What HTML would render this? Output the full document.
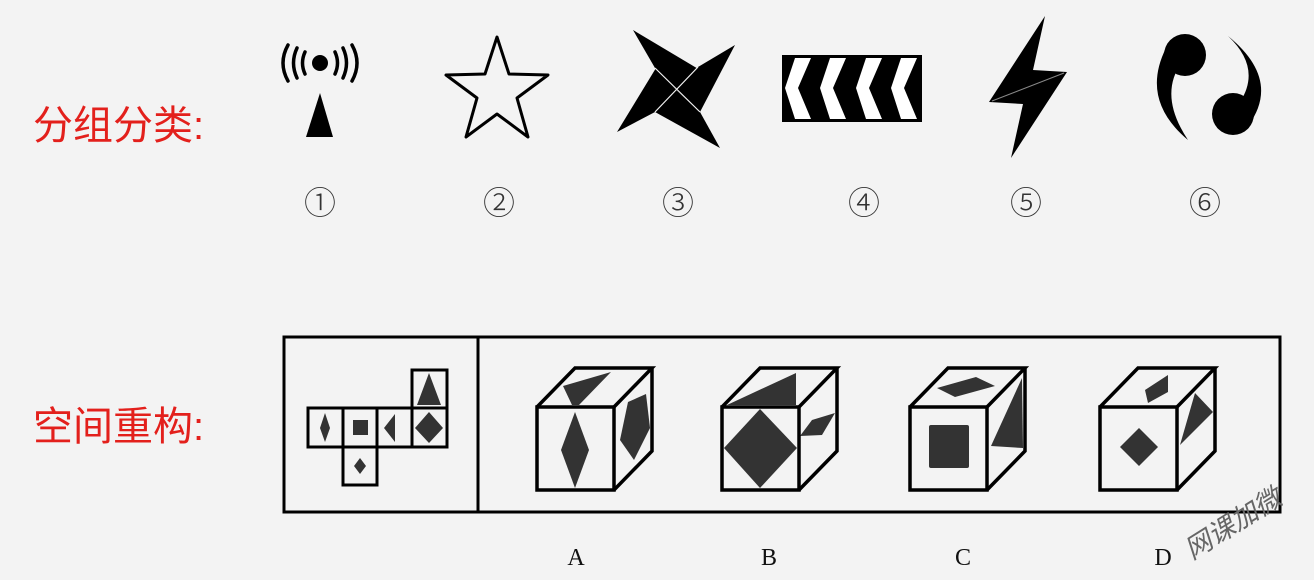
<!DOCTYPE html>
<html><head><meta charset="utf-8"><style>
html,body{margin:0;padding:0;background:#f3f3f3;}
svg{display:block}
.r{font-family:"Liberation Sans","Noto Sans CJK SC",sans-serif;fill:#e3201c;font-size:40px}
.n{font-family:"Noto Sans CJK SC","DejaVu Sans",sans-serif;fill:#333;font-size:32px;font-weight:300}
.l{font-family:"Liberation Serif",serif;fill:#111;font-size:24px}
</style></head><body>
<svg width="1314" height="580" viewBox="0 0 1314 580" xmlns="http://www.w3.org/2000/svg">
<rect width="1314" height="580" fill="#f3f3f3"/>
<text class="r" x="33" y="139">分组分类:</text>
<text class="r" x="33" y="440">空间重构:</text>

<!-- 1 antenna -->
<g fill="#000" stroke="#000">
<circle cx="320" cy="63" r="8" stroke="none"/>
<g fill="none" stroke-width="3.5" stroke-linecap="round">
<path d="M305 52 Q300 63 305 74"/><path d="M297 48 Q290 63 297 78"/><path d="M288 45 Q278 63 288 81"/>
<path d="M335 52 Q340 63 335 74"/><path d="M343 48 Q350 63 343 78"/><path d="M352 45 Q362 63 352 81"/>
</g>
<path d="M320 93 L333 137 L306 137 Z" stroke="none"/>
</g>
<!-- 2 star -->
<path d="M497 37 L509 74 L548 75 L517 98 L528 137 L497 114 L466 137 L477 98 L446 75 L485 74 Z" fill="none" stroke="#000" stroke-width="3" stroke-linejoin="round"/>
<!-- 3 pinwheel -->
<g fill="#000">
<path d="M633 30 L700 70 L676 90 L655 68 Z"/>
<path d="M735 45 L700 112 L676 90 L698 67 Z"/>
<path d="M720 148 L655 112 L676 90 L700 112 Z"/>
<path d="M617 132 L656 68 L676 90 L655 112 Z"/>
</g>
<g stroke="#f3f3f3" stroke-width="1.2"><line x1="655" y1="68" x2="700" y2="112"/><line x1="698" y1="67" x2="655" y2="112"/></g>
<!-- 4 chevrons -->
<rect x="782" y="55" width="140" height="67" fill="#000"/>
<g fill="#fff">
<path d="M795 58 L811 58 L798 88 L811 119 L795 119 L785 88 Z"/>
<path d="M830 58 L846 58 L833 88 L846 119 L830 119 L820 88 Z"/>
<path d="M866 58 L882 58 L869 88 L882 119 L866 119 L856 88 Z"/>
<path d="M901 58 L917 58 L904 88 L917 119 L901 119 L891 88 Z"/>
</g>
<!-- 5 lightning -->
<path d="M1045 16 L1033 70 L1067 72 L1011 158 L1023 104 L989 102 Z" fill="#000"/>
<line x1="992" y1="101" x2="1064" y2="73" stroke="#888" stroke-width="1"/>
<!-- 6 commas -->
<g fill="#000">
<circle cx="1185" cy="55" r="21"/>
<path d="M1166 48 Q1140 100 1188 140 Q1158 95 1182 62 Z"/>
<circle cx="1233" cy="114" r="21"/>
<path d="M1228 36 Q1282 80 1248 126 L1240 102 Q1262 68 1228 36 Z"/>
</g>

<g class="n" text-anchor="middle">
<text x="320" y="214">①</text><text x="499" y="214">②</text><text x="678" y="214">③</text>
<text x="864" y="214">④</text><text x="1026" y="214">⑤</text><text x="1205" y="214">⑥</text>
</g>

<!-- box -->
<rect x="284" y="337" width="996" height="175" fill="none" stroke="#000" stroke-width="3"/>
<line x1="478" y1="337" x2="478" y2="512" stroke="#000" stroke-width="3"/>

<!-- net -->
<g fill="none" stroke="#000" stroke-width="3">
<rect x="308" y="408" width="139" height="39"/>
<line x1="343" y1="408" x2="343" y2="447"/><line x1="377" y1="408" x2="377" y2="447"/><line x1="412" y1="408" x2="412" y2="447"/>
<rect x="412" y="370" width="35" height="38"/>
<rect x="343" y="447" width="34" height="38"/>
</g>
<g fill="#333">
<path d="M325 413 L330 428 L325 442 L320 428 Z"/>
<rect x="353" y="420" width="15" height="15"/>
<path d="M395 414 L395 442 L384 428 Z"/>
<path d="M429 373 L441 405 L417 405 Z"/>
<path d="M429 412 L443 428 L429 443 L415 428 Z"/>
<path d="M360 458 L366 466 L360 474 L354 466 Z"/>
</g>

<!-- cubes -->
<g fill="#333">
<path d="M575 412 L589 450 L575 488 L561 450 Z"/>
<path d="M563 386 L611 372 L579 405 L572 405 Z"/>
<path d="M628 402 L646 394 L650 428 L634 460 L620 440 Z"/>
<path d="M760 409 L797 448 L760 488 L724 448 Z"/>
<path d="M727 405 L796 373 L796 405 Z"/>
<path d="M800 436 L812 420 L835 413 L822 435 Z"/>
<rect x="929" y="425" width="40" height="43" rx="2"/>
<path d="M937 388 L976 377 L995 386 L955 397 Z"/>
<path d="M991 446 L1022 378 L1023 448 Z"/>
<path d="M1139 428 L1158 447 L1139 466 L1120 447 Z"/>
<path d="M1145 390 L1168 375 L1168 392 L1148 403 Z"/>
<path d="M1180 445 L1195 393 L1213 412 Z"/>
</g>
<g fill="none" stroke="#000" stroke-width="3.5" stroke-linejoin="miter">
<g transform="translate(537,0)"><rect x="0" y="407" width="77" height="83"/><path d="M0 407 L38 368 L115 368 L77 407 M115 368 L115 451 L77 490"/></g>
<g transform="translate(722,0)"><rect x="0" y="407" width="77" height="83"/><path d="M0 407 L38 368 L115 368 L77 407 M115 368 L115 451 L77 490"/></g>
<g transform="translate(910,0)"><rect x="0" y="407" width="77" height="83"/><path d="M0 407 L38 368 L115 368 L77 407 M115 368 L115 451 L77 490"/></g>
<g transform="translate(1100,0)"><rect x="0" y="407" width="77" height="83"/><path d="M0 407 L38 368 L115 368 L77 407 M115 368 L115 451 L77 490"/></g>
</g>

<g class="l" text-anchor="middle">
<text x="576" y="565">A</text><text x="769" y="565">B</text><text x="963" y="565">C</text><text x="1163" y="565">D</text>
</g>
<text x="1192" y="560" transform="rotate(-32 1192 560)" font-family="'Noto Sans CJK SC',sans-serif" font-size="27" fill="#666" font-style="italic">网课加微</text>
</svg>
</body></html>
